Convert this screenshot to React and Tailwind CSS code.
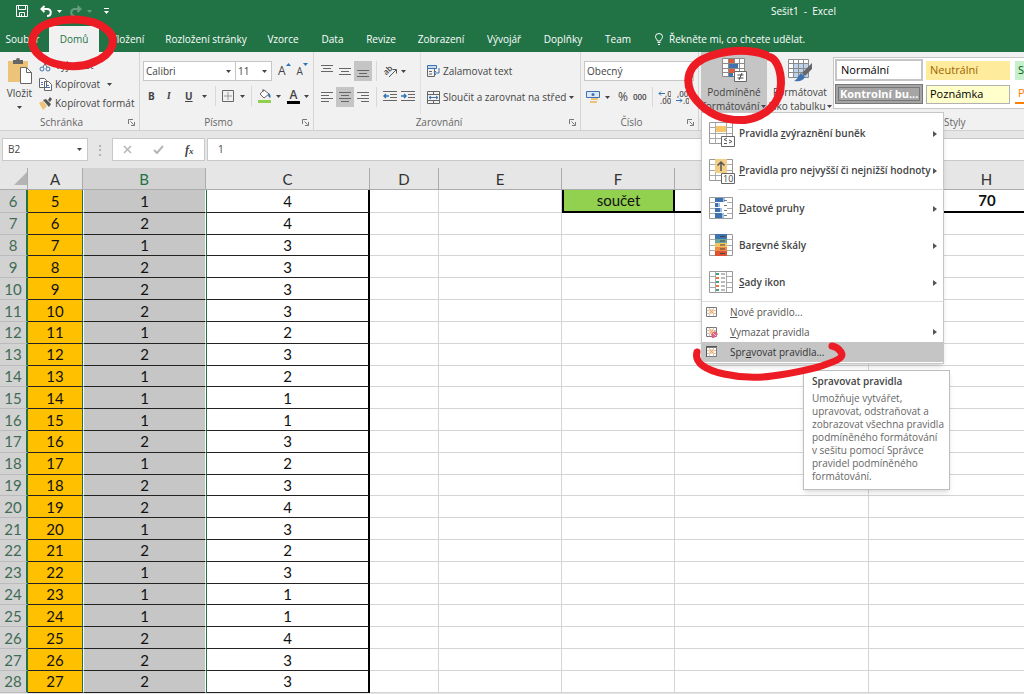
import React, { useState } from 'react';

const TABS = [
  { name: 'Soubor', width: 'w-[49px] pr-1' },
  { name: 'Domů', width: 'w-[50px]' },
  { name: 'Vložení', width: 'w-[57px]' },
  { name: 'Rozložení stránky', width: 'w-[100px]' },
  { name: 'Vzorce', width: 'w-[54px]' },
  { name: 'Data', width: 'w-[45px]' },
  { name: 'Revize', width: 'w-[52px]' },
  { name: 'Zobrazení', width: 'w-[68px]' },
  { name: 'Vývojář', width: 'w-[58px]' },
  { name: 'Doplňky', width: 'w-[60px]' },
  { name: 'Team', width: 'w-[50px]' },
];

// Column B and C values for rows 6 to 28
const ROWS = [
  [1, 4], [2, 4], [1, 3], [2, 3], [2, 3], [2, 3], [1, 2], [2, 3],
  [1, 2], [1, 1], [1, 1], [2, 3], [1, 2], [2, 3], [2, 4], [1, 3],
  [2, 2], [1, 3], [1, 1], [1, 1], [2, 4], [2, 3], [2, 3],
];

const COLUMNS = [
  { name: 'A', width: 'w-[55px]' },
  { name: 'B', width: 'w-[123px]' },
  { name: 'C', width: 'w-[164px]' },
  { name: 'D', width: 'w-[69px]' },
  { name: 'E', width: 'w-[123px]' },
  { name: 'F', width: 'w-[113px]' },
  { name: 'G', width: 'w-[194px]' },
  { name: 'H', width: 'w-[236px]' },
];

const Caret = ({ className = '' }) => (
  <svg className={`h-[3px] w-[5px] shrink-0 ${className}`} viewBox="0 0 5 3" fill="currentColor">
    <path d="M0 0h5L2.5 3z" />
  </svg>
);

const Launcher = () => (
  <button aria-label="Další možnosti" className="absolute right-1 bottom-1">
    <svg className="h-[7px] w-[7px]" viewBox="0 0 7 7" fill="none" stroke="#777">
      <path d="M.5 5V.5H5M2.5 2.5l3 3M6.5 3v3.5H3" />
    </svg>
  </button>
);

// Ribbon group with its caption at the bottom
const Group = ({ title, className, titleClass = 'text-center', launcher = true, children }) => (
  <section className={`relative flex shrink-0 flex-col ${className}`}>
    <div className="flex h-[62px]">{children}</div>
    <div className={`h-4 leading-4 text-[#666] ${titleClass}`}>{title}</div>
    {launcher && <Launcher />}
  </section>
);

// Grid of cells behind the conditional formatting icons
const CellGrid = ({ children }) => (
  <svg className="h-[26px] w-[26px] shrink-0" viewBox="0 0 26 26" fill="none">
    <path fill="#fff" stroke="#999" d="M.5 1.5h23v21H.5z" />
    <path stroke="#aaa" d="M6.5 1.5v21M17.5 1.5v21M.5 6.5h23M.5 12.5h23M.5 17.5h23" />
    {children}
  </svg>
);

const HighlightIcon = () => (
  <CellGrid>
    <path fill="#f6c667" d="M7 5h10v6H7z" />
    <path fill="#fff" stroke="#666" d="M12.5 15.5h13v10h-13z" />
    <path stroke="#555" d="M18 17l-3 1.500 3 1.500M15 22.500h3M20 19l3 1.500-3 1.500" />
  </CellGrid>
);

const TopIcon = () => (
  <CellGrid>
    <path fill="#f3cf86" d="M6 1h12v14H6z" />
    <path stroke="#555" strokeWidth="1.500" d="M12 13V4M8.500 7.500L12 4l3.500 3.500" />
    <path fill="#fff" stroke="#666" d="M12.500 15.500h13v10h-13z" />
    <text x="14" y="24" fontSize="9" fontWeight="400" fill="#444">10</text>
  </CellGrid>
);

const BarsIcon = () => (
  <CellGrid>
    <path fill="#fff" d="M6 2h12v20H6z" />
    <path fill="#3f73b0" d="M6 2h8v4H6zM6 7h3v4H6zM6 12h5v4H6zM6 17h7v5H6z" />
    <path fill="#9dbfe4" d="M14 2h2v4h-2zM9 7h2v4H9zM11 12h2v4h-2zM13 17h2v5h-2z" />
    <path stroke="#777" d="M15 4.500h3M15 9.500h3M15 14.500h3M15 19.500h3" />
  </CellGrid>
);

const ScaleIcon = () => (
  <CellGrid>
    <path fill="#3f73b0" d="M6 1h12v5H6z" />
    <path fill="#6aa69b" d="M6 6h12v4H6z" />
    <path fill="#f1c45f" d="M6 10h12v4H6z" />
    <path fill="#ee8b45" d="M6 14h12v4H6z" />
    <path fill="#dd5230" d="M6 18h12v5H6z" />
    <path stroke="#444" d="M11 3.500h5M11 8h5M11 12h5M11 16h5M11 20.500h5" />
  </CellGrid>
);

const SetsIcon = () => (
  <CellGrid>
    <path fill="#fff" d="M7 2h10v20H7z" />
    <path fill="#4c9c7c" d="M7 3h3v2H7zM7 11h3v2H7zM7 19h3v2H7z" />
    <path fill="#e87a3e" d="M7 7h3v2H7zM7 15h3v2H7z" />
    <path stroke="#777" d="M12 4h4M12 8h4M12 12h4M12 16h4M12 20h4" />
  </CellGrid>
);

const SmallGrid = ({ children }) => (
  <svg className="h-3 w-3 shrink-0" viewBox="0 0 12 12" fill="none">
    <path fill="#fff" stroke="#777" d="M.5 1.500h10v9H.5z" />
    <path stroke="#aaa" strokeWidth=".7" d="M3.500 1.500v9M7.500 1.500v9M.5 4.500h10M.5 7.500h10" />
    <path fill="#f8d5ab" d="M3 3h5v5H3z" />
    <path stroke="#e0a066" strokeWidth=".8" d="M4 4l3 3M7 4L4 7" />
    {children}
  </svg>
);

const BIG_ITEMS = [
  { icon: HighlightIcon, before: 'Pravidla ', key: 'z', after: 'výraznění buněk' },
  { icon: TopIcon, before: '', key: 'P', after: 'ravidla pro nejvyšší či nejnižší hodnoty' },
  { icon: BarsIcon, before: '', key: 'D', after: 'atové pruhy' },
  { icon: ScaleIcon, before: 'Bar', key: 'e', after: 'vné škály' },
  { icon: SetsIcon, before: '', key: 'S', after: 'ady ikon' },
];

const SubArrow = () => (
  <svg className="mr-[6px] ml-auto h-[6px] w-[4px] shrink-0" viewBox="0 0 4 6" fill="#555">
    <path d="M0 0l4 3-4 3z" />
  </svg>
);

const FormattingMenu = () => (
  <div role="menu" className="absolute top-full left-0 z-20 w-[243px] border border-[#c6c6c6] bg-white pt-[2px] pb-px text-left text-[#555] shadow-md">
    {BIG_ITEMS.map(({ icon: Icon, before, key, after }, i) => (
      <React.Fragment key={after}>
        {i === 2 && <div className="ml-9 h-px bg-[#dcdcdc]" />}
        <button role="menuitem" className="flex h-[37px] w-full items-center pl-[7px] font-semibold whitespace-nowrap text-[#444]">
          <Icon />
          <span className="ml-1">{before}<u>{key}</u>{after}</span>
          <SubArrow />
        </button>
      </React.Fragment>
    ))}
    <div className="h-px bg-[#dcdcdc]" />
    <button role="menuitem" className="flex h-5 w-full items-center pl-1">
      <SmallGrid />
      <span className="ml-3"><u>N</u>ové pravidlo...</span>
    </button>
    <button role="menuitem" className="flex h-5 w-full items-center pl-1">
      <SmallGrid>
        <path fill="#e0607e" d="M5 8l4-3 3 3-4 4H6z" />
        <path stroke="#fff" strokeWidth=".7" d="M7 7l3 3" />
      </SmallGrid>
      <span className="ml-3"><u>V</u>ymazat pravidla</span>
      <SubArrow />
    </button>
    <div className="relative">
      <button role="menuitem" className="flex h-5 w-full items-center bg-[#c5c5c5] pl-1 text-[#333]">
        <SmallGrid>
          <path stroke="#555" d="M.5 11V.5H11" />
        </SmallGrid>
        <span className="ml-3">Spr<u>a</u>vovat pravidla...</span>
      </button>
      <div role="tooltip" className="absolute top-7 left-[101px] w-[147px] border border-[#bebebe] bg-white px-2 pt-1 pb-[6px] leading-[13px] whitespace-nowrap text-[#666] shadow-md">
        <div className="mb-1 font-semibold text-[#444]">Spravovat pravidla</div>
        Umožňuje vytvářet,<br />
        upravovat, odstraňovat a<br />
        zobrazovat všechna pravidla<br />
        podmíněného formátování<br />
        v sešitu pomocí Správce<br />
        pravidel podmíněného<br />
        formátování.
      </div>
      {/* Hand drawn underline */}
      <svg className="pointer-events-none absolute -top-1 -left-3 h-12 w-[160px]" viewBox="0 0 160 48" fill="none">
        <path d="M7 14C4 25 16 32 34 36C52 40 68 40 82 38C104 35 124 31 137 26C149 22 154 19 151 14C149 11 147 9 142 8" stroke="#ed1c24" strokeWidth="7" strokeLinecap="round" strokeLinejoin="round" />
      </svg>
    </div>
  </div>
);

const AlignLines = ({ d, active, label }) => (
  <button aria-label={label} className={`flex h-5 w-[18px] items-center justify-center ${active ? 'bg-[#c5c5c5]' : ''}`}>
    <svg className="h-[14px] w-[14px]" viewBox="0 0 14 14" stroke="#666"><path d={d} /></svg>
  </button>
);

const IndentIcon = ({ d }) => (
  <svg className="h-3 w-[14px]" viewBox="0 0 14 12" fill="none" stroke="#666">
    <path d="M0 .5h14M7 3.500h7M7 6.500h7M0 9.500h14" />
    <path stroke="#2f74b5" strokeWidth="1.500" d={d} />
  </svg>
);

const Divider = () => <div className="h-5 w-px bg-[#d8d8d8]" />;

const Clipboard = () => (
  <Group title="Schránka" className="w-[140px] border-r border-[#d5d5d5]" titleClass="pr-4 text-center">
    <button className="ml-[5px] flex w-[29px] flex-col items-center pt-[6px] whitespace-nowrap">
      <svg className="h-[26px] w-6 shrink-0" viewBox="0 0 24 26">
        <path fill="#edc37a" d="M0 3h20v21H0z" />
        <path fill="#666" d="M5 2h3a2 2 0 014 0h3v4H5z" />
        <path fill="#fff" stroke="#666" d="M12.500 9.500h6l5 5v11h-11z" />
        <path fill="none" stroke="#666" d="M18.500 9.500v5h5" />
      </svg>
      <span className="leading-[18px]">Vložit</span>
      <Caret className="mt-1" />
    </button>
    <div className="flex flex-col pt-1 pl-[5px]">
      <button className="flex h-[19px] items-center gap-[3px]">
        <svg className="h-[13px] w-[13px]" viewBox="0 0 13 13" fill="none" stroke="#3f73b0">
          <circle cx="3" cy="10" r="2" /><circle cx="9" cy="10" r="2" />
          <path stroke="#666" d="M8 8L3 0M4 8l5-8" />
        </svg>
        Vyjmout
      </button>
      <button className="flex h-[19px] items-center gap-[3px]">
        <svg className="h-[13px] w-[13px]" viewBox="0 0 13 13" fill="#fff" stroke="#666">
          <path d="M.5 .5h5l2 2v7h-7zM5.500 3.500h4l3 3v6h-7z" />
          <path stroke="#3f73b0" d="M2 4.500h2M2 6.500h2M7 7.500h3M7 9.500h4" />
        </svg>
        Kopírovat
        <Caret className="ml-1" />
      </button>
      <button className="flex h-[19px] items-center gap-[3px] whitespace-nowrap">
        <svg className="h-[13px] w-[13px]" viewBox="0 0 13 13">
          <path fill="#edc37a" d="M0 6l4-2 4 5-4 4z" />
          <path fill="#555" d="M4 3l3-1 5 5-2 3zM9 3l2-3 2 2-2 3z" />
        </svg>
        Kopírovat formát
      </button>
    </div>
  </Group>
);

const FontGroup = () => (
  <Group title="Písmo" className="w-[174px] border-r border-[#d5d5d5]" titleClass="pr-4 text-center">
    <div className="flex flex-1 flex-col pt-[9px] pl-[3px]">
      <div className="flex h-5 items-center">
        <label className="relative flex h-5 w-[93px] items-center border border-[#c6c6c6] bg-white">
          <select aria-label="Písmo" className="w-full appearance-none pl-[2px] outline-none"><option>Calibri</option></select>
          <Caret className="pointer-events-none absolute right-1" />
        </label>
        <label className="relative -ml-px flex h-5 w-[37px] items-center border border-[#c6c6c6] bg-white">
          <select aria-label="Velikost písma" className="w-full appearance-none pl-[2px] outline-none"><option>11</option></select>
          <Caret className="pointer-events-none absolute right-1" />
        </label>
        <button aria-label="Zvětšit písmo" className="ml-[6px] flex items-start text-[12px] leading-4">
          A<svg className="h-[3px] w-[5px]" viewBox="0 0 5 3" fill="#2f74b5"><path d="M0 3h5L2.500 0z" /></svg>
        </button>
        <button aria-label="Zmenšit písmo" className="ml-[6px] flex items-start text-[10px] leading-4">
          A<svg className="h-[3px] w-[5px]" viewBox="0 0 5 3" fill="#2f74b5"><path d="M0 0h5L2.500 3z" /></svg>
        </button>
      </div>
      <div className="mt-[5px] flex h-5 items-center pl-[5px]">
        <button className="w-[19px] text-left font-bold">B</button>
        <button className="w-[18px] text-left font-serif font-bold italic">I</button>
        <button className="w-[13px] text-left font-bold underline">U</button>
        <Caret className="ml-1" />
        <div className="mr-[6px] ml-2"><Divider /></div>
        <button aria-label="Ohraničení">
          <svg className="h-3 w-3" viewBox="0 0 12 12" fill="none" stroke="#666">
            <path d="M.5 .5h11v11H.5z" /><path stroke="#999" d="M6 2v8M2 6h8" />
          </svg>
        </button>
        <Caret className="ml-[6px]" />
        <div className="mx-[6px]"><Divider /></div>
        <button aria-label="Barva výplně">
          <svg className="h-[14px] w-[14px]" viewBox="0 0 14 14" fill="none">
            <path fill="#fff" stroke="#666" d="M2 5l4-4 5 4-5 4zM5 3V0" />
            <path fill="#3f73b0" d="M10 4c3 1 3 4 2 5-2-1-2-3-2-5z" />
            <path fill="#8fd14f" d="M0 11h13v3H0z" />
          </svg>
        </button>
        <Caret className="ml-1" />
        <button aria-label="Barva písma" className="ml-[6px] flex h-[15px] w-[13px] flex-col items-center">
          <span className="text-[12px] font-semibold leading-3">A</span>
          <span className="h-[3px] w-full shrink-0 bg-black" />
        </button>
        <Caret className="ml-1" />
      </div>
    </div>
  </Group>
);

const AlignGroup = () => (
  <Group title="Zarovnání" className="w-[267px] border-r border-[#d5d5d5]" titleClass="pr-4 text-center">
    <div className="flex w-[107px] flex-col border-r border-[#e0e0e0] pt-[9px] pl-1">
      <div className="flex h-5 items-center">
        <AlignLines label="Nahoru" d="M1 1.500h12M3 4.500h8M1 7.500h12" />
        <AlignLines label="Na střed svisle" d="M1 4.500h12M3 7.500h8M1 10.500h12" />
        <AlignLines label="Dolů" active d="M1 6.500h12M3 9.500h8M1 12.500h12" />
        <div className="mx-1"><Divider /></div>
        <button aria-label="Orientace" className="ml-[2px]">
          <svg className="h-[14px] w-[14px]" viewBox="0 0 14 14" fill="none" stroke="#555">
            <text x="1" y="10" fontSize="8" fontWeight="600" fill="#444" stroke="none" transform="rotate(-45 4 8)">ab</text>
            <path d="M6 13l7-7M9.500 5.500H13.500v4" />
          </svg>
        </button>
        <Caret className="ml-1" />
      </div>
      <div className="mt-[6px] flex h-5 items-center">
        <AlignLines label="Vlevo" d="M1 2.500h12M1 5.500h8M1 8.500h12M1 11.500h8" />
        <AlignLines label="Na střed" active d="M1 2.500h12M3 5.500h8M1 8.500h12M3 11.500h8" />
        <AlignLines label="Vpravo" d="M1 2.500h12M5 5.500h8M1 8.500h12M5 11.500h8" />
        <div className="mx-1"><Divider /></div>
        <button aria-label="Zmenšit odsazení" className="ml-[2px]"><IndentIcon d="M6 5H1M3 3L1 5l2 2" /></button>
        <button aria-label="Zvětšit odsazení" className="ml-1"><IndentIcon d="M0 5h5M3 3l2 2-2 2" /></button>
      </div>
    </div>
    <div className="flex flex-1 flex-col pt-[9px] pl-[6px] whitespace-nowrap">
      <button className="flex h-5 items-center gap-[3px]">
        <svg className="h-[14px] w-[13px]" viewBox="0 0 13 14" fill="none" stroke="#666">
          <path fill="#c7daf0" stroke="#3f73b0" d="M.5 1.500h9v3h-9z" />
          <path d="M.5 4.500v8h7v-8M2 7.500h3M2 10h3" />
          <path stroke="#3f73b0" d="M12 4v5H7M9 7L7 9l2 2" />
        </svg>
        Zalamovat text
      </button>
      <button className="mt-[6px] flex h-5 items-center gap-[3px]">
        <svg className="h-[13px] w-[13px]" viewBox="0 0 13 13" fill="none" stroke="#666">
          <path d="M.5 .5h12v12H.5zM.5 3.500h12M.5 9.500h12M6.500 .5v3M6.500 9.500v3" />
          <path stroke="#3f73b0" d="M2 6.500h9M4 5L2 6.500 4 8M9 5l2 1.500L9 8" />
        </svg>
        Sloučit a zarovnat na střed
        <Caret />
      </button>
    </div>
  </Group>
);

const NumberGroup = () => (
  <Group title="Číslo" className="w-[118px] border-r border-[#d5d5d5]" titleClass="pr-4 text-center">
    <div className="flex flex-col pt-[9px] pl-[3px]">
      <label className="relative flex h-5 w-[110px] items-center border border-[#c6c6c6] bg-white">
        <select aria-label="Formát čísla" className="w-full appearance-none pl-[2px] outline-none"><option>Obecný</option></select>
      </label>
      <div className="mt-[6px] flex h-5 items-center pl-[2px]">
        <button aria-label="Účetnický formát">
          <svg className="h-[14px] w-[14px]" viewBox="0 0 14 14" fill="none">
            <path fill="#dce8f5" stroke="#3f73b0" d="M.5 1.500h13v6H.5z" />
            <circle cx="7" cy="4.500" r="1.500" fill="#3f73b0" />
            <path fill="#edc37a" d="M5 8h7v2H5zM4 11h7v2H4z" />
          </svg>
        </button>
        <Caret className="ml-[5px]" />
        <button className="ml-2 text-[12px]">%</button>
        <button className="ml-[5px] text-[8px] font-semibold">000</button>
        <div className="ml-[5px]"><Divider /></div>
        <button aria-label="Přidat desetinné místo" className="ml-[5px]">
          <svg className="h-[14px] w-[13px]" viewBox="0 0 13 14" fill="none">
            <path stroke="#2f74b5" d="M7 3.500H1M3 1.500l-2 2 2 2" />
            <text x="7" y="7" fontSize="8" fontWeight="600" fill="#555">,0</text>
            <text x="2" y="14" fontSize="8" fontWeight="600" fill="#555">,00</text>
          </svg>
        </button>
        <button aria-label="Odebrat desetinné místo" className="ml-[5px]">
          <svg className="h-[14px] w-[13px]" viewBox="0 0 13 14" fill="none">
            <text x="1" y="7" fontSize="8" fontWeight="600" fill="#555">,00</text>
            <path stroke="#2f74b5" d="M0 10.500h6M4 8.500l2 2-2 2" />
            <text x="7" y="14" fontSize="8" fontWeight="600" fill="#555">,0</text>
          </svg>
        </button>
      </div>
    </div>
  </Group>
);

const StylesGroup = () => (
  <Group title="Styly" className="min-w-0 flex-1 shrink" titleClass="pl-[245px]" launcher={false}>
    <div className="relative ml-[2px] h-[60px] shrink-0">
      <button className="flex h-[60px] w-[66px] flex-col items-center bg-[#c5c5c5] pt-1 leading-[14px] whitespace-nowrap">
        <svg className="h-[26px] w-[26px] shrink-0" viewBox="0 0 26 26" fill="none">
          <path fill="#fff" stroke="#8a8a8a" d="M1.500 2.500h22v18h-22zM7.500 2.500v18M13.500 2.500v18M18.500 2.500v18M1.500 7.500h22M1.500 12.500h22M1.500 16.500h22" />
          <path fill="#e0583c" d="M8 3h5v4H8zM8 13h6v4H8z" />
          <path fill="#3f73b0" d="M8 8h9v4H8zM8 17h4v4H8z" />
          <path fill="#fff" stroke="#666" d="M13.500 15.500h12v10h-12z" />
          <path stroke="#444" d="M16.500 19h6M16.500 22h6M21 17l-3 7" />
        </svg>
        <span className="mt-[3px]">Podmíněné</span>
        <span className="flex items-center gap-px">formátování <Caret /></span>
      </button>
      <FormattingMenu />
      {/* Hand drawn ring */}
      <svg className="pointer-events-none absolute -top-[6px] -left-[19px] z-30 h-20 w-[106px]" viewBox="0 0 106 80" fill="none">
        <path d="M84 9C65 2 40 4 21 13C2 23 3 42 15 55C26 68 43 75 63 74C84 71 99 57 99 37C99 23 94 13 88 11" stroke="#ed1c24" strokeWidth="8" strokeLinecap="round" />
      </svg>
    </div>
    <button className="flex h-[60px] w-[66px] shrink-0 flex-col items-center pt-1 leading-[14px] whitespace-nowrap">
      <svg className="h-[26px] w-[26px] shrink-0" viewBox="0 0 26 26" fill="none">
        <path fill="#fff" d="M1.500 3.500h20v18h-20z" />
        <path fill="#bdd3ec" d="M7 8h14v13H7z" />
        <path stroke="#8a8a8a" d="M1.500 3.500h20v18h-20zM1.500 7.500h20M1.500 12.500h20M1.500 16.500h20M6.500 3.500v18M11.500 3.500v18M16.500 3.500v18" />
        <path fill="#666" d="M25 7v6l-7 7-3-3z" />
        <path fill="#3f73b0" d="M14 17l4 4c-2 4-6 5-11 4 4-2 4-5 7-8z" />
      </svg>
      <span className="mt-[3px]">Formátovat</span>
      <span className="flex items-center gap-px">jako tabulku <Caret /></span>
    </button>
    <div className="mt-[5px] flex h-[52px] min-w-0 flex-1 overflow-hidden border border-r-0 border-[#c6c6c6] bg-white text-[11px] whitespace-nowrap text-black">
      <div className="flex shrink-0 flex-col gap-[3px] p-px">
        <button className="h-[22px] w-[88px] border-2 border-[#c5c5c5] pl-1 text-left">Normální</button>
        <button className="h-5 w-[88px] border-4 border-double border-[#777] bg-[#a5a5a5] pl-px text-left font-bold leading-3 text-white">Kontrolní bu...</button>
      </div>
      <div className="flex shrink-0 flex-col gap-[5px] pt-[3px] pl-[2px]">
        <button className="h-[19px] w-[84px] bg-[#ffeb9c] pl-1 text-left text-[#9c6500]">Neutrální</button>
        <button className="h-[19px] w-[84px] border border-[#b2b2b2] bg-[#ffffcc] pl-[3px] text-left">Poznámka</button>
      </div>
      <div className="flex shrink-0 flex-col gap-[5px] pt-[3px] pl-[5px]">
        <button className="h-[19px] w-[84px] bg-[#c6efce] pl-[3px] text-left text-[#006100]">Správně</button>
        <button className="h-[19px] w-[84px] border-b-2 border-[#ff8001] pl-[3px] text-left text-[#fa7d00]">Propojená</button>
      </div>
    </div>
  </Group>
);

const cellBorder = 'border-r border-b border-[#d4d4d4]';

const Sheet = () => (
  <main className="flex flex-1 overflow-hidden pt-[7px] pb-px">
    <table className="w-[1105px] shrink-0 table-fixed border-separate border-spacing-0 text-center font-['Lato',sans-serif] text-[15px] leading-5 text-[#111]">
      <thead>
        <tr className="h-[22px] text-[#333]">
          <th className="w-7 border-r border-b border-[#ababab] bg-[#e6e6e6]">
            <svg className="ml-auto h-[13px] w-[13px]" viewBox="0 0 13 13" fill="#b4b4b4"><path d="M13 0v13H0z" /></svg>
          </th>
          {COLUMNS.map(col => (
            <th
              key={col.name}
              className={`border-r border-b border-[#ababab] font-normal ${col.width} ${col.name === 'B' ? 'bg-[#d2d2d2] text-[#217346]' : 'bg-[#e6e6e6]'}`}
            >
              {col.name}
            </th>
          ))}
        </tr>
      </thead>
      <tbody>
        {ROWS.map(([b, c], i) => (
          <tr key={i} className="bg-white">
            <th className="border-r-2 border-b border-r-[#217346] border-b-[#bbb] bg-[#d2d2d2] font-normal text-[#3f6b55]">{i + 6}</th>
            <td className="border-r border-b border-r-[#217346] border-b-[#222] bg-[#ffc000]">{i + 5}</td>
            <td className="border-x border-b border-x-white border-b-[#222] bg-[#c6c6c6]">{b}</td>
            <td className="border-r-2 border-b border-l border-r-black border-b-[#222] border-l-[#217346]">{c}</td>
            <td className={cellBorder}></td>
            <td className={cellBorder}></td>
            {i === 0 ? (
              <>
                <td className="border-x-2 border-b-2 border-black bg-[#92d050]">součet</td>
                <td className="border-b-2 border-black"></td>
                <td className="border-b-2 border-black font-bold">70</td>
              </>
            ) : (
              <>
                <td className={cellBorder}></td>
                <td className={cellBorder}></td>
                <td className={cellBorder}></td>
              </>
            )}
          </tr>
        ))}
      </tbody>
    </table>
  </main>
);

export default function App() {
  const [activeTab, setActiveTab] = useState('Domů');

  return (
    <div className="flex min-h-screen flex-col overflow-hidden bg-[#e6e6e6] font-['Open_Sans',sans-serif] text-[10px] text-[#444]">
      {/* Title bar */}
      <header className="bg-[#217346] text-white">
        <div className="flex h-[26px] items-center pb-1">
          <div className="flex items-center pl-4">
            <button aria-label="Uložit">
              <svg className="h-3 w-3" viewBox="0 0 12 12" fill="none" stroke="#fff">
                <path d="M.5 .5h11v11H.5zM2.500 .5v4h7v-4" /><path d="M3.500 11.500v-4h5v4M5.500 9v2" />
              </svg>
            </button>
            <button aria-label="Zpět" className="ml-3">
              <svg className="h-3 w-3" viewBox="0 0 12 12" fill="none" stroke="#fff" strokeWidth="2">
                <path d="M4.500 1L1.500 4l3 3M2 4h5c5 0 5 7 0 7" />
              </svg>
            </button>
            <Caret className="ml-[5px]" />
            <button aria-label="Znovu" className="ml-2 opacity-30">
              <svg className="h-3 w-3" viewBox="0 0 12 12" fill="none" stroke="#fff" strokeWidth="2">
                <path d="M7.500 1l3 3-3 3M10 4H5C0 4 0 11 5 11" />
              </svg>
            </button>
            <Caret className="ml-[5px] opacity-30" />
            <svg className="ml-3 h-[6px] w-[5px]" viewBox="0 0 5 6" fill="#fff"><path d="M0 0h5v1H0zM0 3h5L2.500 6z" /></svg>
          </div>
          <h1 className="ml-auto pr-[188px] whitespace-pre">Sešit1  -  Excel</h1>
        </div>
        <nav className="relative flex h-[26px] items-stretch whitespace-nowrap">
          {TABS.map(tab => (
            <button
              key={tab.name}
              onClick={() => setActiveTab(tab.name)}
              className={`flex shrink-0 items-center justify-center ${tab.width} ${activeTab === tab.name ? 'bg-[#f1f1f1] text-[#217346]' : ''}`}
            >
              {tab.name}
            </button>
          ))}
          <button className="ml-3 flex items-center gap-[6px]">
            <svg className="h-3 w-2" viewBox="0 0 8 12" fill="none" stroke="#fff">
              <path d="M2.500 8C2 6 .5 5.500 .5 3.500a3.500 3 0 017 0C7.500 5.500 6 6 5.500 8zM2.500 9.500h3M3 11.500h2" />
            </svg>
            Řekněte mi, co chcete udělat.
          </button>
          {/* Hand drawn ring */}
          <svg className="pointer-events-none absolute -top-[11px] left-[27px] z-30 h-[56px] w-[90px]" viewBox="0 0 90 56" fill="none">
            <path d="M79 14C66 3 41 2 20 9C4 15 2 29 10 38C21 51 49 55 67 47C87 39 91 23 79 14Z" stroke="#ed1c24" strokeWidth="8" strokeLinejoin="round" />
          </svg>
        </nav>
      </header>

      {/* Ribbon */}
      <div className="flex border-b border-[#d0d0d0] bg-[#f1f1f1]">
        <Clipboard />
        <FontGroup />
        <AlignGroup />
        <NumberGroup />
        <StylesGroup />
      </div>

      {/* Formula bar */}
      <div className="mt-[7px] flex h-[23px] items-stretch text-[#444]">
        <label className="relative ml-[2px] flex w-[86px] items-center border border-[#c9c9c9] bg-white">
          <input aria-label="Pole názvů" defaultValue="B2" className="w-full pl-[5px] outline-none" />
          <Caret className="absolute right-[5px]" />
        </label>
        <span className="flex w-[24px] items-center justify-center text-[12px] text-[#999]">⋮</span>
        <div className="flex w-[93px] items-center justify-around border border-[#c9c9c9] bg-white">
          <button aria-label="Zrušit">
            <svg className="h-[9px] w-[9px]" viewBox="0 0 9 9" stroke="#b5b5b5" strokeWidth="1.500"><path d="M1 1l7 7M8 1L1 8" /></svg>
          </button>
          <button aria-label="Zadat">
            <svg className="h-[9px] w-[11px]" viewBox="0 0 11 9" fill="none" stroke="#b5b5b5" strokeWidth="2"><path d="M1 5l3 3 6-7" /></svg>
          </button>
          <button className="font-['Liberation_Serif',serif] text-[12px] font-bold italic">f<span className="text-[9px]">x</span></button>
        </div>
        <input aria-label="Řádek vzorců" defaultValue="1" className="ml-[2px] min-w-0 flex-1 border border-r-0 border-[#c9c9c9] bg-white pl-[10px] outline-none" />
      </div>

      <Sheet />
    </div>
  );
}
